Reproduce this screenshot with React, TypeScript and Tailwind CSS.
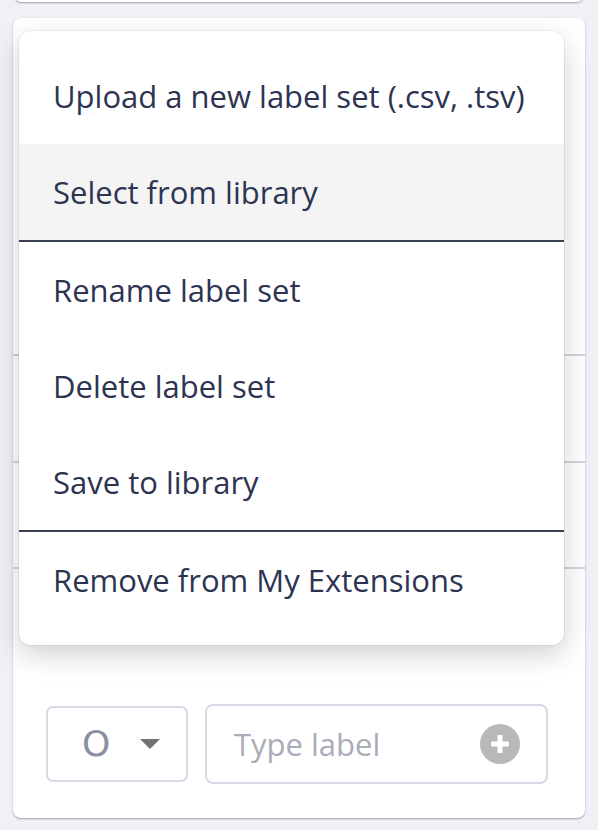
import { useState } from 'react';

const menuGroups = [
  ['Upload a new label set (.csv, .tsv)', 'Select from library'],
  ['Rename label set', 'Delete label set', 'Save to library'],
  ['Remove from My Extensions'],
];

function LabelMenu() {
  const [hovered, setHovered] = useState('Select from library');

  return (
    <div className="absolute left-[6px] top-[13px] w-[545px] py-[17px] bg-white rounded-[12px] shadow-[0_0_0_1px_rgba(0,0,0,0.06),0_10px_28px_rgba(0,0,0,0.18)]">
      {menuGroups.map((group, i) => (
        <div key={i} className={i > 0 ? 'border-t-2 border-[#3b4257]' : ''}>
          {group.map((item) => (
            <div
              key={item}
              onMouseEnter={() => setHovered(item)}
              className={`flex items-center h-[96px] px-[34px] text-[31px] text-[#2d3452] ${
                hovered === item ? 'bg-[#f4f4f4]' : ''
              }`}
            >
              {item}
            </div>
          ))}
        </div>
      ))}
    </div>
  );
}

export default function App() {
  return (
    <div className="w-[598px] h-[830px] overflow-hidden bg-[#eff1f6] px-[13px] font-['Open_Sans',sans-serif]">
      <div className="mt-[-38px] mx-[2px] h-[40px] bg-white rounded-b-[6px] shadow-[0_1px_2px_rgba(60,64,90,0.45)]" />
      <div className="relative mt-[16px] h-[800px] bg-white rounded-[8px] shadow-[0_1px_2px_rgba(60,64,90,0.45)] flex flex-col">
        <div className="flex flex-col pt-[228px]">
          <div className="h-[110px] border-b-2 border-[#d3d4dc]" />
          <div className="h-[107px] border-b-2 border-[#d3d4dc]" />
          <div className="h-[106px] border-b-2 border-[#d3d4dc]" />
        </div>
        <div className="flex items-center gap-[17px] px-[33px] mt-[135px]">
          <button className="flex items-center justify-between w-[142px] h-[76px] pl-[34px] pr-[26px] border-2 border-[#d6d9e6] rounded-[7px]">
            <span className="font-['DejaVu_Sans',sans-serif] text-[36px] leading-none text-[#8a8fa1]">O</span>
            <span className="w-0 h-0 border-l-[10px] border-r-[10px] border-t-[10px] border-l-transparent border-r-transparent border-t-[#737373]" />
          </button>
          <div className="flex items-center justify-between w-[343px] h-[80px] pl-[27px] pr-[26px] border-2 border-[#d6d9e6] rounded-[8px]">
            <span className="text-[31px] text-[#a9acb9]">Type label</span>
            <span className="flex items-center justify-center w-[40px] h-[40px] rounded-full bg-[#b8b8b8]">
              <svg width="22" height="22" viewBox="0 0 22 22">
                <path d="M11 2v18M2 11h18" stroke="white" strokeWidth="5" />
              </svg>
            </span>
          </div>
        </div>
        <LabelMenu />
      </div>
    </div>
  );
}
